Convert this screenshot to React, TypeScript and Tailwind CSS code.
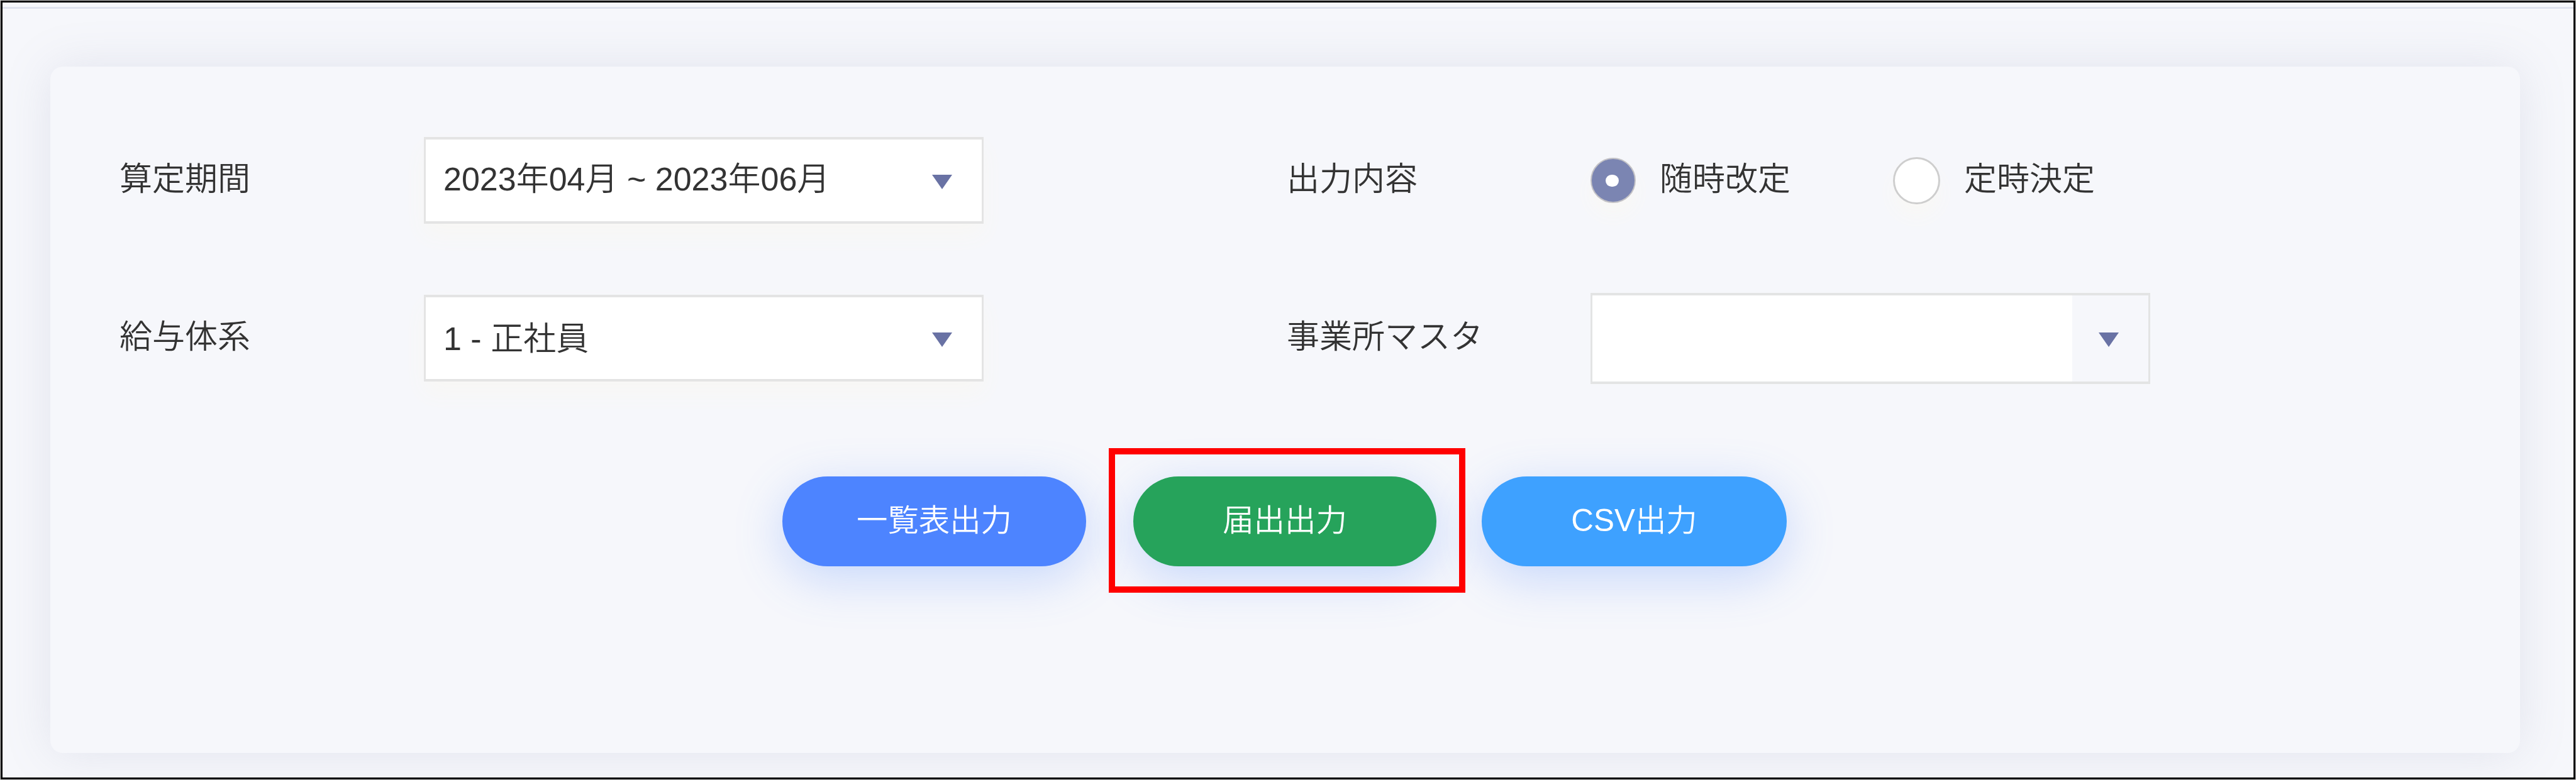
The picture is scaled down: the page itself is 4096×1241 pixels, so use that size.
import React from "react";

function Triangle() {
  return (
    <svg className="mt-[4px] block h-[23px] w-[32px] shrink-0" viewBox="0 0 32 23">
      <path d="M0 0H32L16 23Z" fill="#6972a4" />
    </svg>
  );
}

function Label({ children }: { children: React.ReactNode }) {
  return <div className="w-[483px] shrink-0 pb-[4px] whitespace-nowrap">{children}</div>;
}

function Select({ children }: { children: React.ReactNode }) {
  return (
    <div className="flex h-[138px] w-[890px] shrink-0 items-center justify-between border-x-[3px] border-y-4 border-[#e4e4e4] bg-white pr-[47px] pl-[28px] shadow-[0_18px_34px_#f8f7f4]">
      {children}
      <Triangle />
    </div>
  );
}

function Radio({ checked, children }: { checked?: boolean; children: React.ReactNode }) {
  return (
    <label className="flex items-center whitespace-nowrap">
      {checked ? (
        <span className="flex size-[72px] items-center justify-center rounded-full border-2 border-[#c3c2c6] bg-[#7b85b2] pr-[3px] shadow-[0_19px_30px_#f9f8f5]">
          <span className="h-[19px] w-[21px] rounded-full bg-white" />
        </span>
      ) : (
        <span className="size-[75px] rounded-full border-[3px] border-[#cecece] bg-white shadow-[0_19px_30px_#f9f8f5]" />
      )}
      <span className="pb-[5px] pl-[38px]">{children}</span>
    </label>
  );
}

const pill =
  "flex h-[143px] items-center justify-center rounded-full pb-[3px] text-[49.4px] text-white shadow-[0_19px_77px_rgba(77,132,255,0.28)]";

export default function App() {
  return (
    <div
      lang="ja"
      className="h-[1241px] w-[4096px] overflow-hidden bg-[#c9c9c9] p-px font-['Liberation_Sans','Noto_Sans_CJK_JP',sans-serif] text-[52px] leading-[60px] font-[350] text-[#333]"
    >
      <div className="flex h-full flex-col overflow-hidden border-3 border-black bg-[#f6f7fb]">
        <div className="h-[10px] shrink-0 border-b-[3px] border-[#dfe2ed]" />
        <div className="mt-[92px] ml-[76px] h-[1092px] w-[3927px] shrink-0 rounded-[20px] bg-[#f6f7fb] pt-[108px] pl-[110px] shadow-[0_0_77px_rgba(125,130,165,0.16)]">
          <div className="flex h-[146px] items-center">
            <div className="flex w-[1856px] items-center">
              <Label>算定期間</Label>
              <div className="pl-px">
                <Select>
                  <span className="pb-[5px]">2023年04月 ~ 2023年06月</span>
                </Select>
              </div>
            </div>
            <Label>出力内容</Label>
            <div className="flex items-center">
              <div className="w-[481px]">
                <Radio checked>随時改定</Radio>
              </div>
              <Radio>定時決定</Radio>
            </div>
          </div>

          <div className="mt-[105px] flex h-[146px] items-center">
            <div className="flex w-[1856px] items-center">
              <Label>給与体系</Label>
              <div className="pl-px">
                <Select>
                  <span className="pt-[2px]">1 - 正社員</span>
                </Select>
              </div>
            </div>
            <Label>事業所マスタ</Label>
            <div className="flex h-[145px] w-[890px] border-x-[3px] border-y-4 border-[#e3e4e4] bg-white">
              <div className="flex-1" />
              <div className="flex w-[121px] items-center bg-[#f6f7fb] pl-[42px]">
                <Triangle />
              </div>
            </div>
          </div>

          <div className="mt-[147px] ml-[1054px] flex">
            <div className={`${pill} w-[483px] bg-[#4d84ff]`}>一覧表出力</div>
            <div className="relative mr-[72px] ml-[75px]">
              <div className={`${pill} w-[482px] bg-[#26a35b]`}>届出出力</div>
              <div className="absolute -top-[45px] -left-[39px] h-[230px] w-[567px] border-[10px] border-[#ff0000]" />
            </div>
            <div className={`${pill} w-[485px] bg-[#3ea1ff]`}>CSV出力</div>
          </div>
        </div>
      </div>
    </div>
  );
}
